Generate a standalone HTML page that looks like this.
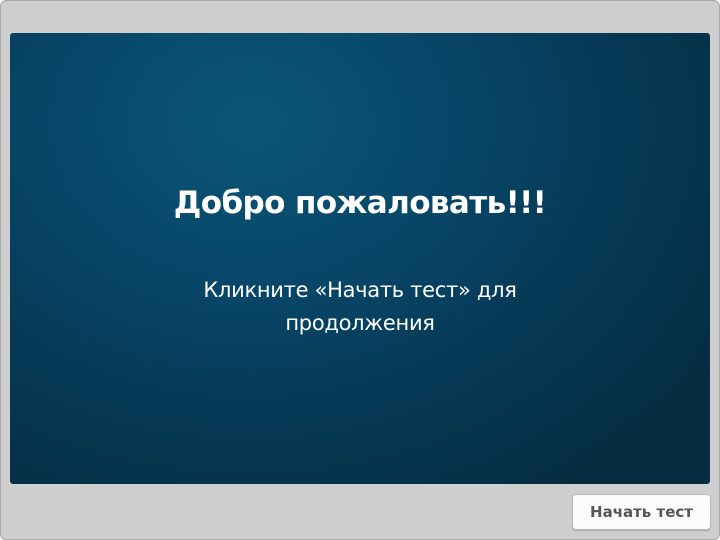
<!DOCTYPE html>
<html><head><meta charset="utf-8"><style>
html,body{margin:0;padding:0;width:720px;height:540px;overflow:hidden;background:#fff;font-family:"DejaVu Sans","Liberation Sans",sans-serif}
.frame{position:absolute;left:0;top:0;width:718px;height:538px;border:1px solid #aaa;border-radius:6px;background:#cfcfcf}
.slide{position:absolute;left:10px;top:33px;width:700px;height:451px;border-radius:3px;
background:radial-gradient(ellipse 560px 440px at 240px 90px,#0a5676 0%,#08476a 35%,#063a56 65%,#052d42 100%);}
.t1{position:absolute;left:0;width:700px;top:152px;text-align:center;color:#fff;font-weight:bold;font-size:31px;letter-spacing:-0.6px}
.t2{position:absolute;left:0;width:700px;top:241px;text-align:center;color:#fff;font-size:21px;line-height:33px;letter-spacing:-0.3px}
.btn{position:absolute;left:572px;top:494px;width:137px;height:34px;background:#fbfbfb;border:1px solid #bbb;border-radius:4px;box-shadow:0 1px 1px rgba(0,0,0,.2);text-align:center;line-height:34px;font-weight:bold;font-size:15px;color:#555}
</style></head><body>
<div class="frame"></div>
<div class="slide">
<div class="t1">Добро пожаловать!!!</div>
<div class="t2">Кликните «Начать тест» для<br>продолжения</div>
</div>
<div class="btn">Начать тест</div>
</body></html>
